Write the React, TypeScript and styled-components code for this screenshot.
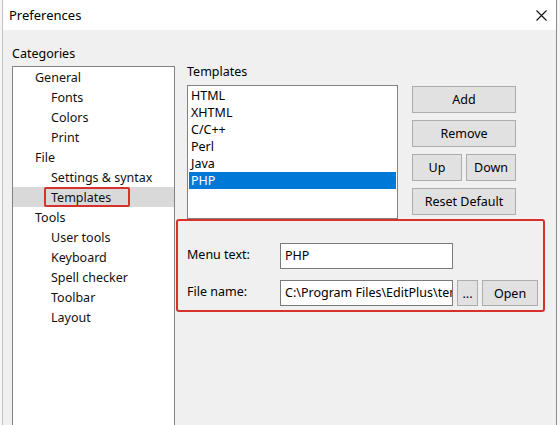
import React from "react";
import styled, { createGlobalStyle } from "styled-components";

const GlobalStyle = createGlobalStyle`
    html, body {
        margin: 0;
        padding: 0;
        background: #f6f6f8;
    }

    body {
        font-family: "Noto Sans", "Liberation Sans", sans-serif;
        font-size: 12.5px;
        color: #000;
    }
`;

const Window = styled.div`
    width: 553px;
    height: 425px;
    margin-left: 2px;
    border-left: 1px solid #c2c2c2;
    border-right: 1px solid #8c8c8c;
    background: #f0f0f0;
    display: flex;
    flex-direction: column;
    overflow: hidden;
`;

const TitleBar = styled.div`
    height: 30px;
    flex: none;
    background: #fff;
    display: flex;
    align-items: center;
    justify-content: space-between;
    padding: 0 9px 0 6px;
    font-size: 13px;
`;

const Body = styled.div`
    flex: 1;
    display: flex;
    padding-left: 9px;
`;

const LeftColumn = styled.div`
    width: 163px;
    padding-top: 16px;
    display: flex;
    flex-direction: column;
`;

const Caption = styled.div`
    height: 16px;
    line-height: 16px;
    white-space: nowrap;
`;

const Tree = styled.div`
    margin-top: 4px;
    height: 400px;
    border: 1px solid #828282;
    background: #fff;
`;

const TreeRow = styled.div<{ $level: number; $selected?: boolean }>`
    position: relative;
    height: 20px;
    line-height: 21px;
    padding-left: ${(p) => (p.$level === 0 ? 22 : 38)}px;
    background: ${(p) => (p.$selected ? "#d9d9d9" : "transparent")};
    color: #111;
    white-space: nowrap;
`;

const Highlight = styled.span`
    position: absolute;
    left: 31px;
    top: 0;
    width: 82px;
    height: 16px;
    border: 2px solid #d7312e;
    border-radius: 2px;
`;

const RightColumn = styled.div`
    flex: 1;
    margin-left: 1px;
    padding-top: 34px;
    display: flex;
    flex-direction: column;
`;

const TopSection = styled.div`
    display: flex;
    padding-left: 11px;
    gap: 14px;
`;

const ListColumn = styled.div`
    display: flex;
    flex-direction: column;
`;

const ListBox = styled.div`
    margin-top: 5px;
    width: 207px;
    height: 130px;
    border: 1px solid #828282;
    background: #fff;
    padding: 1px;
`;

const ListItem = styled.div<{ $selected?: boolean }>`
    height: 17px;
    line-height: 17px;
    padding-left: 2px;
    background: ${(p) => (p.$selected ? "#0078d7" : "transparent")};
    color: ${(p) => (p.$selected ? "#fff" : "#000")};
`;

const ButtonColumn = styled.div`
    margin-top: 22px;
    width: 104px;
    display: flex;
    flex-direction: column;
    gap: 7px;
`;

const ButtonRow = styled.div`
    display: flex;
    gap: 4px;
`;

const Button = styled.button<{ $width?: number }>`
    box-sizing: border-box;
    width: ${(p) => (p.$width ? `${p.$width}px` : "100%")};
    height: 27px;
    padding: 0;
    background: #e1e1e1;
    border: 1px solid #adadad;
    border-radius: 0;
    font-family: inherit;
    font-size: 12.5px;
    color: #000;
    flex: none;
`;

const GroupBox = styled.div`
    box-sizing: border-box;
    width: 369px;
    height: 93px;
    border: 2px solid #d7312e;
    border-radius: 3px;
    padding: 22px 0 0 9px;
    display: flex;
    flex-direction: column;
    gap: 11px;
`;

const FieldRow = styled.div`
    display: flex;
    align-items: center;
    height: 26px;
`;

const FieldLabel = styled.div`
    width: 93px;
    flex: none;
    padding-bottom: 3px;
    white-space: nowrap;
`;

const TextField = styled.div`
    box-sizing: border-box;
    width: 173px;
    height: 26px;
    line-height: 24px;
    padding-left: 4px;
    border: 1px solid #7a7a7a;
    background: #fff;
    white-space: nowrap;
    overflow: hidden;
    flex: none;
`;

const FieldButton = styled(Button)`
    height: 26px;
    margin-left: 4px;
`;

const CloseIcon = () => (
    <svg width="11" height="11" viewBox="0 0 11 11">
        <path d="M0.5 0.5 L10.5 10.5 M10.5 0.5 L0.5 10.5" stroke="#111" strokeWidth="1.1" />
    </svg>
);

const categories: { label: string; level: number }[] = [
    { label: "General", level: 0 },
    { label: "Fonts", level: 1 },
    { label: "Colors", level: 1 },
    { label: "Print", level: 1 },
    { label: "File", level: 0 },
    { label: "Settings & syntax", level: 1 },
    { label: "Templates", level: 1 },
    { label: "Tools", level: 0 },
    { label: "User tools", level: 1 },
    { label: "Keyboard", level: 1 },
    { label: "Spell checker", level: 1 },
    { label: "Toolbar", level: 1 },
    { label: "Layout", level: 1 },
];

const templates = ["HTML", "XHTML", "C/C++", "Perl", "Java", "PHP"];

const App = () => {
    return (
        <>
            <GlobalStyle />
            <Window>
                <TitleBar>
                    <span>Preferences</span>
                    <CloseIcon />
                </TitleBar>
                <Body>
                    <LeftColumn>
                        <Caption>Categories</Caption>
                        <Tree>
                            {categories.map((c) => (
                                <TreeRow
                                    key={c.label}
                                    $level={c.level}
                                    $selected={c.label === "Templates"}
                                >
                                    {c.label}
                                    {c.label === "Templates" && <Highlight />}
                                </TreeRow>
                            ))}
                        </Tree>
                    </LeftColumn>

                    <RightColumn>
                        <TopSection>
                            <ListColumn>
                                <Caption>Templates</Caption>
                                <ListBox>
                                    {templates.map((t) => (
                                        <ListItem key={t} $selected={t === "PHP"}>
                                            {t}
                                        </ListItem>
                                    ))}
                                </ListBox>
                            </ListColumn>
                            <ButtonColumn>
                                <Button>Add</Button>
                                <Button>Remove</Button>
                                <ButtonRow>
                                    <Button $width={50}>Up</Button>
                                    <Button $width={50}>Down</Button>
                                </ButtonRow>
                                <Button>Reset Default</Button>
                            </ButtonColumn>
                        </TopSection>

                        <GroupBox>
                            <FieldRow>
                                <FieldLabel>Menu text:</FieldLabel>
                                <TextField>PHP</TextField>
                            </FieldRow>
                            <FieldRow>
                                <FieldLabel>File name:</FieldLabel>
                                <TextField>C:\Program Files\EditPlus\template.php</TextField>
                                <FieldButton $width={21}>...</FieldButton>
                                <FieldButton $width={56}>Open</FieldButton>
                            </FieldRow>
                        </GroupBox>
                    </RightColumn>
                </Body>
            </Window>
        </>
    );
};

export default App;
